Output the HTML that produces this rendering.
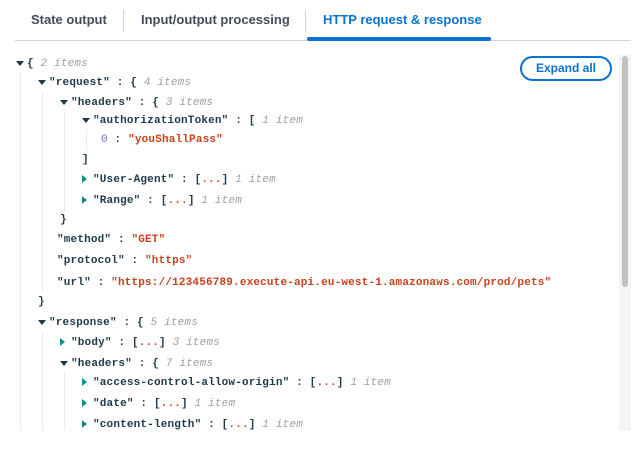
<!DOCTYPE html>
<html><head><style>
body{margin:0;width:637px;height:469px;background:#fff;position:relative;overflow:hidden;font-family:"Liberation Sans",sans-serif}
.tab{position:absolute;top:12px;font-size:13px;font-weight:bold;color:#414d5c}
.div{position:absolute;top:10px;width:1px;height:22px;background:#d1d5db}
.r{position:absolute;font-family:"Liberation Mono",monospace;font-size:11px;font-weight:bold;color:#1d3a4a;white-space:pre;height:16px;line-height:16px;letter-spacing:0.17px;margin-top:2px}
.c{color:#9aa0a6;font-weight:normal;font-style:italic}
.s{color:#c7421b}
.n{color:#7c6fd6;font-weight:normal}
.d{color:#c7421b}
.ad,.ar{position:absolute;width:0;height:0}
.ad{margin-top:1px;border-left:4px solid transparent;border-right:4px solid transparent;border-top:5px solid #1d3a4a}
.ar{margin-top:4px;border-top:4px solid transparent;border-bottom:4px solid transparent;border-left:5px solid #0f8f8a}
.g{position:absolute;width:1px;background:#e9ebed}
</style></head><body>
<div class="tab" style="left:31px">State output</div>
<div class="div" style="left:123px"></div>
<div class="tab" style="left:141px">Input/output processing</div>
<div class="div" style="left:305px"></div>
<div class="tab" style="left:323px;color:#0972d3">HTTP request &amp; response</div>
<div style="position:absolute;left:15px;top:40px;width:616px;height:1px;background:#d1d5db"></div>
<div style="position:absolute;left:307px;top:37px;width:184px;height:4px;background:#0972d3;border-radius:2px"></div>
<div style="position:absolute;left:520px;top:56px;width:88px;height:21px;border:2px solid #0972d3;border-radius:14px;color:#0972d3;font-size:12px;font-weight:bold;text-align:center;line-height:21px">Expand all</div>
<div style="position:absolute;left:619px;top:55px;width:12px;height:376px;background:#f4f4f4"></div>
<div style="position:absolute;left:622px;top:56px;width:6px;height:231px;background:#c1c1c1;border-radius:3px"></div>

<div class="g" style="left:20px;top:72px;height:358px"></div>
<div class="g" style="left:42px;top:92px;height:200px"></div>
<div class="g" style="left:64px;top:112px;height:100px"></div>
<div class="g" style="left:86px;top:130px;height:20px"></div>
<div class="g" style="left:42px;top:332px;height:98px"></div>
<div class="g" style="left:64px;top:372px;height:58px"></div>

<div class="ad" style="left:16px;top:60px"></div><div class="r" style="left:27px;top:54px">{ <span class="c">2 items</span></div>
<div class="ad" style="left:38px;top:79px"></div><div class="r" style="left:49px;top:73px">"request" : { <span class="c">4 items</span></div>
<div class="ad" style="left:60px;top:99px"></div><div class="r" style="left:71px;top:93px">"headers" : { <span class="c">3 items</span></div>
<div class="ad" style="left:82px;top:117px"></div><div class="r" style="left:93px;top:111px">"authorizationToken" : [ <span class="c">1 item</span></div>
<div class="r" style="left:101px;top:130px"><span class="n">0</span> : <span class="s">"youShallPass"</span></div>
<div class="r" style="left:82px;top:150px">]</div>
<div class="ar" style="left:82px;top:171px"></div><div class="r" style="left:93px;top:170px">"User-Agent" : [<span class="d">...</span>] <span class="c">1 item</span></div>
<div class="ar" style="left:82px;top:192px"></div><div class="r" style="left:93px;top:191px">"Range" : [<span class="d">...</span>] <span class="c">1 item</span></div>
<div class="r" style="left:60px;top:210px">}</div>
<div class="r" style="left:57px;top:230px">"method" : <span class="s">"GET"</span></div>
<div class="r" style="left:57px;top:251px">"protocol" : <span class="s">"https"</span></div>
<div class="r" style="left:57px;top:273px">"url" : <span class="s">"https://123456789.execute-api.eu-west-1.amazonaws.com/prod/pets"</span></div>
<div class="r" style="left:38px;top:292px">}</div>
<div class="ad" style="left:38px;top:319px"></div><div class="r" style="left:49px;top:313px">"response" : { <span class="c">5 items</span></div>
<div class="ar" style="left:60px;top:334px"></div><div class="r" style="left:71px;top:333px">"body" : [<span class="d">...</span>] <span class="c">3 items</span></div>
<div class="ad" style="left:60px;top:360px"></div><div class="r" style="left:71px;top:354px">"headers" : { <span class="c">7 items</span></div>
<div class="ar" style="left:82px;top:374px"></div><div class="r" style="left:93px;top:373px">"access-control-allow-origin" : [<span class="d">...</span>] <span class="c">1 item</span></div>
<div class="ar" style="left:82px;top:395px"></div><div class="r" style="left:93px;top:394px">"date" : [<span class="d">...</span>] <span class="c">1 item</span></div>
<div class="ar" style="left:82px;top:416px"></div><div class="r" style="left:93px;top:415px;height:14px;overflow:hidden">"content-length" : [<span class="d">...</span>] <span class="c">1 item</span></div>
</body></html>
